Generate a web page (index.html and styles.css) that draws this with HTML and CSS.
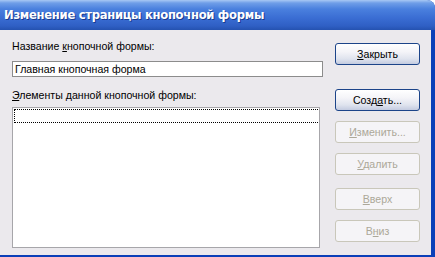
FILE: index.html
```html
<!DOCTYPE html>
<html lang="ru">
<head>
  <meta charset="UTF-8" />
  <title>Изменение страницы кнопочной формы</title>
  <link rel="stylesheet" href="styles.css">
</head>
<body>
  <div class="window">
    <div class="titlebar">Изменение страницы кнопочной формы</div>
    <div class="client">
      <div class="left">
        <label class="caption">Название <u>к</u>нопочной формы:</label>
        <div class="textbox">Главная кнопочная форма</div>
        <label class="caption second"><u>Э</u>лементы данной кнопочной формы:</label>
        <div class="listbox">
          <div class="focus-item"></div>
        </div>
      </div>
      <div class="right">
        <button class="btn"><u>З</u>акрыть</button>
        <button class="btn far">Созд<u>а</u>ть...</button>
        <button class="btn" disabled><u>И</u>зменить...</button>
        <button class="btn" disabled><u>У</u>далить</button>
        <button class="btn mid" disabled><u>В</u>верх</button>
        <button class="btn" disabled>В<u>н</u>из</button>
      </div>
    </div>
  </div>
</body>
</html>
```

FILE: styles.css
```css
* {
  box-sizing: border-box;
}
body {
  margin: 0;
  background: #fff;
  font-family: "Liberation Sans", Arial, sans-serif;
  font-size: 10.6px;
  color: #000;
}
.window {
  width: 435px;
  height: 257px;
  background: #0b3fb8;
  border-top-right-radius: 8px;
  overflow: hidden;
  display: flex;
  flex-direction: column;
}
.titlebar {
  height: 30px;
  padding: 0 0 0 4px;
  line-height: 30px;
  color: #fff;
  font-family: "DejaVu Sans", sans-serif;
  font-size: 11.6px;
  font-weight: bold;
  letter-spacing: -0.3px;
  text-shadow: 1px 1px 0 #1a3b8e;
  background: linear-gradient(#a8c8f4 0, #6f9ee8 3px, #4a80de 9px, #3a6dd3 18px, #2f5fc4 26px, #2552b0 30px);
}
.client {
  flex: 1;
  display: flex;
  background: #ebe9ed;
  margin: 0 4px 2px 0;
}
.left {
  width: 323px;
  padding: 9px 0 0 12px;
}
.caption {
  display: block;
  height: 14px;
  line-height: 14px;
}
.caption.second {
  margin-top: 11px;
}
.textbox {
  width: 311px;
  height: 16px;
  margin-top: 8px;
  border: 1px solid #8c8c8c;
  background: #fff;
  line-height: 14px;
  padding-left: 2px;
}
.listbox {
  width: 308px;
  height: 141px;
  margin-top: 5px;
  border: 1px solid #a7a6aa;
  background: #fff;
  padding: 1px;
}
.focus-item {
  height: 14px;
  border: 1px dotted #000;
  border-right: none;
}
.right {
  display: flex;
  flex-direction: column;
  padding: 13px 0 0 12px;
  gap: 10px;
}
.btn {
  width: 85px;
  height: 22px;
  padding: 0;
  font-family: inherit;
  font-size: 10.6px;
  color: #000;
  border: 1px solid #1c4489;
  border-radius: 3px;
  background: linear-gradient(#ffffff 0, #f4f4f8 40%, #dfe3ee 75%, #c3cbe0 100%);
}
.btn.far {
  margin-top: 14px;
}
.btn.mid {
  margin-top: 3px;
}
.btn:disabled {
  color: #aca899;
  border-color: #c9c7ba;
  background: #f5f4f7;
}
```
